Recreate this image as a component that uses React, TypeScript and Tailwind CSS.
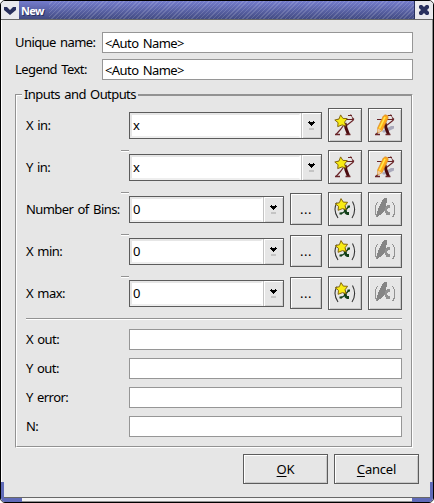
import React from "react";

const grooveButton =
  "flex items-center justify-center border border-[#5c5c5c] bg-[#e6e6e6] shadow-[inset_1px_1px_0_#fff,inset_-1px_-1px_0_#c8c8c8]";

function Field({ value, className }: { value?: string; className: string }) {
  return (
    <div className={`flex h-[21px] shrink-0 items-center border border-[#969696] bg-white pl-[2px] pt-px ${className}`}>
      {value}
    </div>
  );
}

function Combo({ value, wide }: { value: string; wide?: boolean }) {
  return (
    <div className={`flex h-[27px] shrink-0 border border-[#5c5c5c] bg-white ${wide ? "w-[193px]" : "w-[155px]"}`}>
      <div className="flex flex-1 items-center border-2 border-[#e6e6e6] border-b-[#eeeeee] border-r-white pl-[1px]">{value}</div>
      <div className="flex w-5 items-center justify-center border-l border-[#c4c4c4] bg-[#e6e6e6] shadow-[inset_1px_1px_0_#fff,inset_-1px_-1px_0_#d0d0d0]">
        <svg width="7" height="9" viewBox="0 0 7 9" shapeRendering="crispEdges">
          <path d="M1 0h1v1h3V0h1v1h1v1H6v1H5v1H4v1H3V4H2V3H1V2H0V1h1z" fill="#000" />
          <path d="M1 7h5v2H1z" fill="#c4c4c4" />
        </svg>
      </div>
    </div>
  );
}

function Star() {
  return (
    <path
      d="M6.6 .9 8.9 4.4 13.2 4.6 10.6 8.1 11.8 12 8.1 10.9 3.7 12.6 4.1 8.7 .8 6 5 5z"
      fill="#f8ec14"
      stroke="#86680c"
      strokeWidth="1"
    />
  );
}

function Archer() {
  return (
    <g fill="none" stroke="#6a2529">
      <path d="M3 5.5h17M14 1.5h4M16.5 .5l1.500 2M18 3.5l2 2M19.5 6l-7 5.5" strokeWidth="1.1" />
      <path d="M9.5 11.500 6 16l-4 4.500" strokeWidth="1.2" />
      <path d="M11 9l1 5 2.500 6.500" stroke="#4c0c10" strokeWidth="3" />
      <path d="M1 20.500h5M11.500 20.500h5" strokeWidth="1.400" />
    </g>
  );
}

function NewVectorIcon() {
  return (
    <svg width="22" height="22" viewBox="0 0 22 22">
      <Archer />
      <Star />
    </svg>
  );
}

function EditVectorIcon() {
  return (
    <svg width="22" height="22" viewBox="0 0 22 22">
      <path d="M9 18.500 8 17l9-5h3v2.500l-8.500 4z" fill="#a9a9bb" />
      <Archer />
      <path d="M9.200 2.300 11 .8l2.700.8.4 2.400L8.200 16.500 3.800 19l-.2-5z" fill="#ffa91a" stroke="#d28a24" strokeWidth=".7" />
      <path d="M11 3 5.500 14.500" stroke="#ffe84a" strokeWidth="1.700" />
      <path d="M3.700 14.500 7.700 16.500 3.800 19z" fill="#edc9a2" />
    </svg>
  );
}

function NewScalarIcon() {
  return (
    <svg width="22" height="22" viewBox="0 0 22 22">
      <g fill="none" stroke="#353535" strokeWidth="1.1">
        <path d="M3 4.500Q-1.500 12 4 20" />
        <path d="M18.500 3.500Q23 12 18 20" />
      </g>
      <g fill="none" stroke="#124019">
        <path d="M9.500 8.500c2.500 1 1 6.500 3.500 7h2" strokeWidth="2.800" />
        <path d="M15.500 8.500c-3 0-4 7-9 7" strokeWidth="1.400" />
        <path d="M13.500 8.500h2.500M5.500 15.500h2.500" strokeWidth="2" />
      </g>
      <g transform="translate(.4 -.3)"><Star /></g>
    </svg>
  );
}

function EditScalarIcon() {
  return (
    <svg width="22" height="22" viewBox="0 0 22 22">
      <g fill="none" stroke="#929292" shapeRendering="crispEdges">
        <path d="M3.500 4.500l-2 3v8l2 4M18.500 4.500l2 3v8l-2 4" />
        <path d="M10 8l3 7.500h3M16 8.500h-2l-3 3" strokeWidth="2.500" />
      </g>
      <path d="M8 2.500 10 0h3v3l-1 4-2 7-4 3-3 2v-5l3-7z" fill="#858585" shapeRendering="crispEdges" />
    </svg>
  );
}

function InputRow({ label, value, vector, first }: { label: string; value: string; vector?: boolean; first?: boolean }) {
  return (
    <div className="flex h-[34px] items-center">
      <div className="w-[95px] shrink-0 whitespace-nowrap">{label}</div>
      <div className={`h-[2px] w-2 shrink-0 self-start ${first ? "" : "border-b border-t border-b-white border-t-[#929292]"}`} />
      <div className="flex items-center gap-[6px]">
        <Combo value={value} wide={vector} />
        {!vector && <button className={`${grooveButton} h-8 w-8 tracking-[0.5px]`}>...</button>}
        <button className={`${grooveButton} h-[34px] w-[34px]`}>{vector ? <NewVectorIcon /> : <NewScalarIcon />}</button>
        <button className={`${grooveButton} h-[34px] w-[34px]`}>{vector ? <EditVectorIcon /> : <EditScalarIcon />}</button>
      </div>
    </div>
  );
}

export default function App() {
  return (
    <div className="relative flex h-[503px] w-[434px] flex-col overflow-hidden rounded-[5px] border border-black bg-[#e6e6e6] font-['Noto_Sans',sans-serif] text-[13px] leading-[17px] tracking-[-0.58px] text-black [word-spacing:1.5px]">
      <div className="flex h-[19px] shrink-0 border-b border-[#686868]">
        <div className="flex w-[18px] items-center justify-center bg-[#e9e9ed]">
          <svg width="12" height="9" viewBox="0 0 12 9">
            <path d="M0 1h3l3 3 3-3h3v3L6 9 0 4z" fill="#29305e" />
          </svg>
        </div>
        <div className="flex flex-1 items-center border-r border-[#29305e] bg-[linear-gradient(#747ccc,#424b83)] pl-[2px]">
          <span className="w-[28px] text-[11px] font-bold tracking-[-0.7px] text-white [text-shadow:1px_1px_0_#29305e]">New</span>
          <div className="h-full flex-1 bg-[repeating-linear-gradient(135deg,transparent_0_2px,#ffffff25_2px_3px)]" />
        </div>
        <div className="flex w-[18px] items-center justify-center bg-[#e9e9ed]">
          <svg width="10" height="10" viewBox="0 0 10 10">
            <path d="M0 1l1-1h2l2 2 2-2h2l1 1v2L8 5l2 2v2l-1 1H7L5 8l-2 2H1L0 9V7l2-2-2-2z" fill="#29305e" />
          </svg>
        </div>
      </div>

      <div className="flex h-[477px] shrink-0 flex-col border-l border-r border-l-white border-r-[#8c8c8c] pl-[13px] pt-3">
        <div className="flex items-center">
          <div className="w-[87px]">Unique name:</div>
          <Field value="<Auto Name>" className="w-[311px]" />
        </div>
        <div className="mt-[6px] flex items-center">
          <div className="w-[87px]">Legend Text:</div>
          <Field value="<Auto Name>" className="w-[311px]" />
        </div>

        <fieldset className="mt-[6px] h-[362px] w-[398px] min-w-0">
          <div className="flex h-[18px] items-start">
            <div className="mt-2 h-[10px] w-[7px] border-l border-t border-[#929292] shadow-[inset_1px_1px_0_#fff]" />
            <span className="w-[116px] whitespace-nowrap pl-[2px]">Inputs and Outputs</span>
            <div className="mt-2 h-[10px] flex-1 border-r border-t border-white border-t-[#929292] shadow-[inset_-1px_1px_0_#929292]" />
          </div>
          <div className="h-[344px] border-b border-l border-r border-b-white border-l-[#929292] border-r-white">
            <div className="flex h-[343px] flex-col border-b border-l border-r border-b-[#929292] border-l-white border-r-[#929292] pl-[9px] pt-1">
              <div className="flex flex-col gap-2">
                <InputRow label="X in:" value="x" vector first />
                <InputRow label="Y in:" value="x" vector />
                <InputRow label="Number of Bins:" value="0" />
                <InputRow label="X min:" value="0" />
                <InputRow label="X max:" value="0" />
              </div>
              <div className="mt-2 h-[2px] w-[376px] shrink-0 border-b border-t border-b-white border-t-[#929292]" />
              <div className="mt-[9px] flex flex-col gap-2">
                {["X out:", "Y out:", "Y error:", "N:"].map((label) => (
                  <div key={label} className="flex items-center">
                    <div className="w-[103px]">{label}</div>
                    <Field className="w-[273px]" />
                  </div>
                ))}
              </div>
            </div>
          </div>
        </fieldset>

        <div className="mt-[6px] flex gap-[6px] pl-[228px] tracking-[-0.2px]">
          <button className={`${grooveButton} h-[30px] w-[85px]`}><span className="underline underline-offset-2">O</span>K</button>
          <button className={`${grooveButton} h-[30px] w-[85px]`}><span className="underline underline-offset-2">C</span>ancel</button>
        </div>
      </div>
      <div className="h-[5px] shrink-0 border-b border-t border-b-[#929292] border-t-[#686868] bg-[#f4f4f4]" />

      <div className="absolute bottom-0 left-0 h-5 w-[21px] rounded-bl-[4px] border-b-4 border-l-[3px] border-[#606bb8]" />
      <div className="absolute bottom-0 right-0 h-5 w-[21px] rounded-br-[4px] border-b-4 border-r-[3px] border-[#606bb8]" />
    </div>
  );
}
